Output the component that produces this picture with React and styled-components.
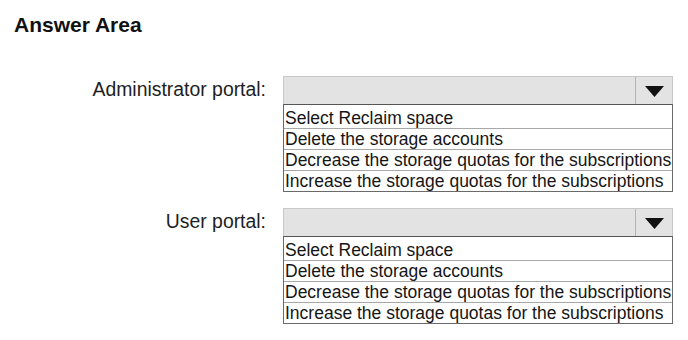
import React from "react";
import styled, { createGlobalStyle } from "styled-components";

const GlobalStyle = createGlobalStyle`
  html, body {
    margin: 0;
    padding: 0;
    background: #ffffff;
    font-family: "Liberation Sans", Arial, sans-serif;
  }
`;

const options = [
  "Select Reclaim space",
  "Delete the storage accounts",
  "Decrease the storage quotas for the subscriptions",
  "Increase the storage quotas for the subscriptions",
];

const Page = styled.div`
  width: 688px;
  height: 340px;
  padding: 13px 0 0 14px;
  box-sizing: border-box;
  color: #1c1c1c;
`;

const Title = styled.h2`
  margin: 0;
  font-size: 21px;
  font-weight: bold;
  line-height: 24px;
  color: #111;
`;

const Form = styled.div`
  display: grid;
  grid-template-columns: 252px 390px;
  column-gap: 17px;
  row-gap: 16px;
  margin-top: 39px;
`;

const Label = styled.div`
  text-align: right;
  font-size: 19.4px;
  line-height: 27px;
  color: #1e1e1e;
`;

const Field = styled.div`
  display: flex;
  flex-direction: column;
  width: 390px;
`;

const SelectBox = styled.div`
  display: flex;
  height: 27px;
  background: #e3e3e3;
  border: 1px solid #c8c8c8;
  border-bottom: none;
  width: 388px;
`;

const SelectValue = styled.div`
  flex: 1;
`;

const ArrowCell = styled.div`
  width: 36px;
  border-left: 1px solid #b4b4b4;
  display: flex;
  align-items: center;
  justify-content: center;
  padding-top: 1px;
`;

const OptionList = styled.ul`
  list-style: none;
  margin: 0;
  padding: 1px 0 0;
  border: 1px solid #6a6a6a;
  border-top-color: #555;
  background: #fff;
  width: 388px;
`;

const OptionRow = styled.li`
  height: 20px;
  line-height: 20px;
  font-size: 17.5px;
  padding-left: 1px;
  white-space: nowrap;
  color: #151515;
  border-top: ${(p) => (p.$first ? "none" : "1px solid #a8a8a8")};
  padding-top: ${(p) => (p.$first ? "2px" : "0")};
`;

const Triangle = () => (
  <svg width="19" height="11" viewBox="0 0 19 11">
    <polygon points="0,0 19,0 9.5,11" fill="#111" />
  </svg>
);

const Dropdown = () => (
  <Field>
    <SelectBox>
      <SelectValue />
      <ArrowCell>
        <Triangle />
      </ArrowCell>
    </SelectBox>
    <OptionList>
      {options.map((o, i) => (
        <OptionRow key={o} $first={i === 0}>
          {o}
        </OptionRow>
      ))}
    </OptionList>
  </Field>
);

export default function App() {
  return (
    <>
      <GlobalStyle />
      <Page>
        <Title>Answer Area</Title>
        <Form>
          <Label>Administrator portal:</Label>
          <Dropdown />
          <Label>User portal:</Label>
          <Dropdown />
        </Form>
      </Page>
    </>
  );
}
